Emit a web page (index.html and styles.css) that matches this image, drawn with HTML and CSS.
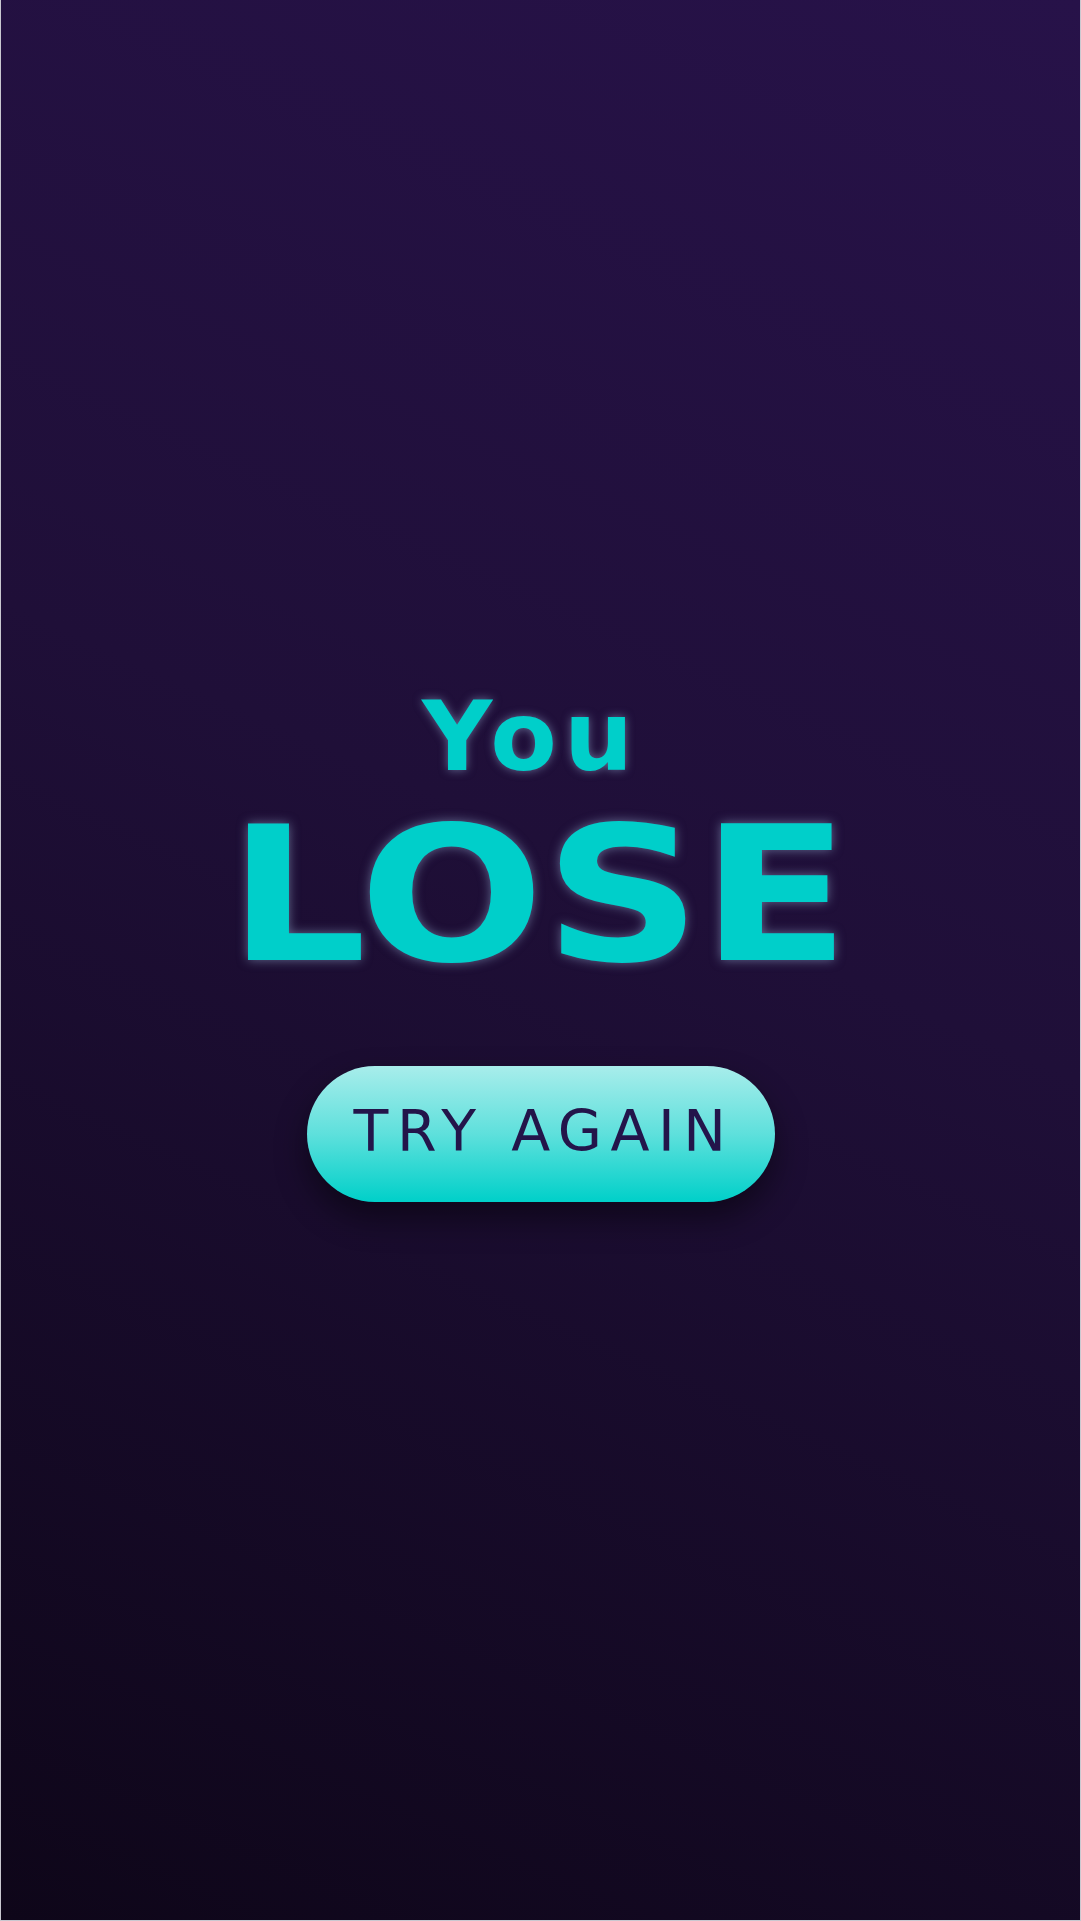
FILE: index.html
```html
<!DOCTYPE html>
<html lang="en">
<head>
<meta charset="utf-8">
<title>You Lose</title>
<link rel="stylesheet" href="styles.css">
</head>
<body>
<main class="screen">
  <h1 class="title">
    <span class="title-small">You</span>
    <span class="title-big">LOSE</span>
  </h1>
  <button class="btn" type="button">TRY AGAIN</button>
</main>
</body>
</html>
```

FILE: styles.css
```css
html, body {
  margin: 0;
  padding: 0;
}
body {
  background: #c9c8d0;
  width: 1081px;
  height: 1921px;
  overflow: hidden;
}
.screen {
  box-sizing: border-box;
  margin-left: 1px;
  width: 1079px;
  height: 1920px;
  background: linear-gradient(204deg, #271249 0%, #1f0f38 45%, #0e0619 100%);
  display: flex;
  flex-direction: column;
  align-items: center;
  padding-top: 688px;
  font-family: "DejaVu Sans", "Liberation Sans", sans-serif;
}
.title {
  margin: 0;
  display: flex;
  flex-direction: column;
  align-items: center;
  font-weight: 700;
  color: #00cfca;
  text-shadow: 0 0 10px rgba(170, 200, 235, 0.5);
}
.title-small {
  display: block;
  font-size: 97px;
  line-height: 97px;
  letter-spacing: 7px;
  margin-right: 19px;
}
.title-big {
  display: block;
  font-size: 187px;
  line-height: 187px;
  letter-spacing: 0;
  margin-top: 17px;
  margin-left: -4px;
  transform: scaleX(1.165);
}
.btn {
  margin-top: 77px;
  width: 468px;
  height: 136px;
  border: 0;
  border-radius: 68px;
  background: linear-gradient(180deg, #a8edeb 0%, #5ee0dc 50%, #00d0c9 100%);
  box-shadow: 0 16px 32px rgba(0, 0, 0, 0.45);
  color: #23154a;
  font-family: "DejaVu Sans", "Liberation Sans", sans-serif;
  font-weight: 400;
  font-size: 57px;
  line-height: 1;
  letter-spacing: 8.5px;
  padding: 0 0 5px 7px;
  display: flex;
  align-items: center;
  justify-content: center;
}
```
